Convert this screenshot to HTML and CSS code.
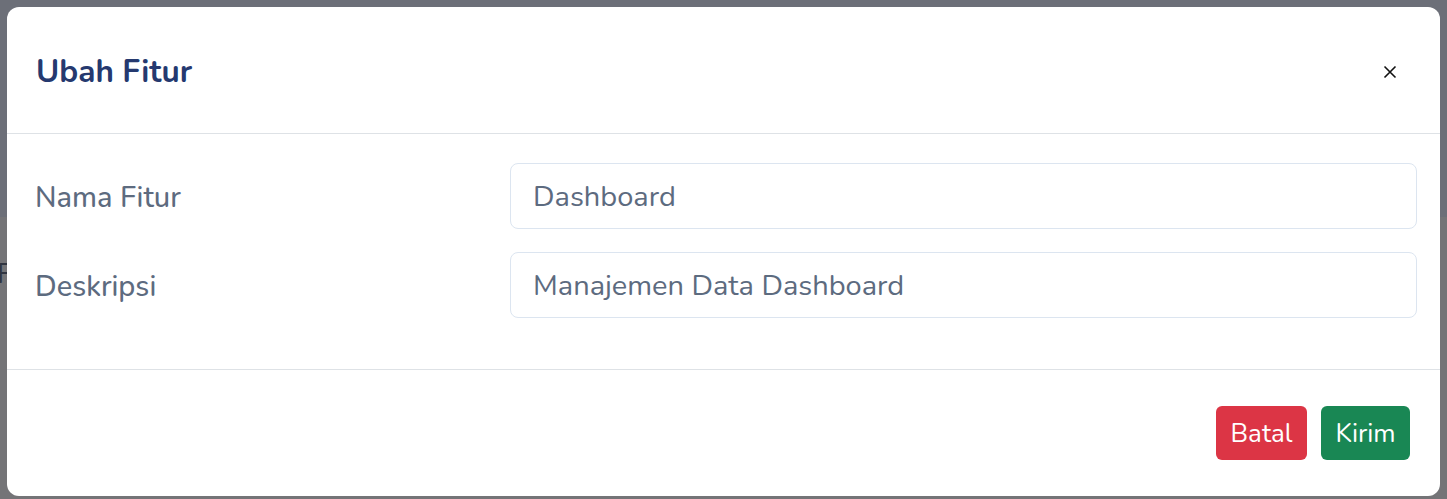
FILE: index.html
```html
<!DOCTYPE html>
<html lang="id">
<head>
<meta charset="utf-8">
<title>Ubah Fitur</title>
<link rel="stylesheet" href="styles.css">
</head>
<body>
<div class="page">
  <div class="page-top"></div>
  <div class="page-rest"><span class="page-text">F</span></div>
</div>
<div class="backdrop">
  <div class="modal">
    <div class="modal-header">
      <h2 class="modal-title">Ubah Fitur</h2>
      <button class="btn-close" aria-label="Close">
        <svg width="14" height="14" viewBox="0 0 14 14"><path d="M1.5 1.5 L12.5 12.5 M12.5 1.5 L1.5 12.5" stroke="#111" stroke-width="1.6" fill="none"/></svg>
      </button>
    </div>
    <div class="modal-body">
      <div class="form-row">
        <label class="form-label">Nama Fitur</label>
        <input class="form-control" type="text" value="Dashboard">
      </div>
      <div class="form-row">
        <label class="form-label">Deskripsi</label>
        <input class="form-control" type="text" value="Manajemen Data Dashboard">
      </div>
    </div>
    <div class="modal-footer">
      <button class="btn btn-danger">Batal</button>
      <button class="btn btn-success">Kirim</button>
    </div>
  </div>
</div>
</body>
</html>
```

FILE: styles.css
```css
* { box-sizing: border-box; }
html, body { margin: 0; padding: 0; }
body {
  width: 1447px;
  height: 499px;
  overflow: hidden;
  font-family: "Nunito", "Lato", "Open Sans", sans-serif;
  background: #747477;
  position: relative;
}
.page { display: flex; flex-direction: column; height: 499px; }
.page-top { height: 217px; background: #6c6f78; flex: none; }
.page-rest { flex: 1; background: #747477; padding-top: 38px; padding-left: 0; }
.page-text { font-size: 28px; color: #2f3440; margin-left: -3px; }

.backdrop {
  position: absolute;
  inset: 0;
  padding: 7px 7px 3px 7px;
}
.modal {
  background: #fff;
  border-radius: 12px;
  width: 1433px;
  height: 489px;
  display: flex;
  flex-direction: column;
}
.modal-header {
  height: 127px;
  border-bottom: 1px solid #dee2e6;
  display: flex;
  align-items: center;
  justify-content: space-between;
  padding: 3px 43px 0 29px;
  flex: none;
}
.modal-title {
  margin: 0;
  font-size: 31.5px;
  font-weight: 700;
  color: #25396f;
  line-height: 1.2;
}
.btn-close {
  border: 0;
  background: transparent;
  padding: 0;
  width: 14px;
  height: 14px;
  display: flex;
  cursor: pointer;
}
.modal-body {
  flex: none;
  height: 236px;
  padding: 29px 23px 0 29px;
  display: flex;
  flex-direction: column;
  gap: 23px;
  border-bottom: 1px solid #dee2e6;
}
.form-row {
  display: grid;
  grid-template-columns: 474px 1fr;
  align-items: center;
}
.form-label {
  font-size: 29px;
  color: #5d6b7f;
  font-weight: 500;
  padding-top: 2px;
  margin-left: -1px;
}
.form-control {
  height: 66px;
  border: 1px solid #dce5f0;
  border-radius: 8px;
  padding: 0 22px;
  font-family: inherit;
  font-size: 29px;
  color: #5d6b7f;
  background: #fff;
  outline: none;
}
.modal-footer {
  flex: 1;
  display: flex;
  justify-content: flex-end;
  align-items: center;
  gap: 14px;
  padding: 0 30px 0 0;
}
.btn {
  height: 54px;
  border: 0;
  border-radius: 6px;
  font-family: inherit;
  font-size: 26px;
  color: #fff;
  padding: 0;
  cursor: pointer;
}
.btn-danger { background: #dc3545; width: 91px; }
.btn-success { background: #198754; width: 89px; }
```
